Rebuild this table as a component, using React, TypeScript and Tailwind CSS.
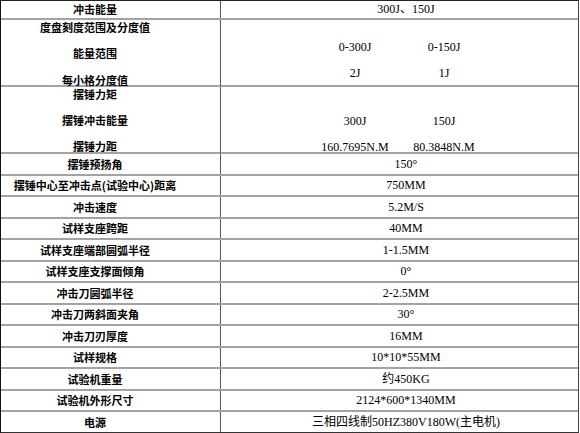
import React from 'react'

type Row = {
  label: string;
  value: string;
}

const rows: Row[] = [
  { label: '摆锤预扬角', value: '150°' },
  { label: '摆锤中心至冲击点(试验中心)距离', value: '750MM' },
  { label: '冲击速度', value: '5.2M/S' },
  { label: '试样支座跨距', value: '40MM' },
  { label: '试样支座端部圆弧半径', value: '1-1.5MM' },
  { label: '试样支座支撑面倾角', value: '0°' },
  { label: '冲击刀圆弧半径', value: '2-2.5MM' },
  { label: '冲击刀两斜面夹角', value: '30°' },
  { label: '冲击刀刃厚度', value: '16MM' },
  { label: '试样规格', value: '10*10*55MM' },
  { label: '试验机重量', value: '约450KG' },
  { label: '试验机外形尺寸', value: '2124*600*1340MM' },
  { label: '电源', value: '三相四线制50HZ380V180W(主电机)' },
]

const labelFont = { fontFamily: '"Noto Sans CJK SC", sans-serif' }
const valueFont = { fontFamily: '"Liberation Serif", "Noto Sans CJK SC", serif' }

const App: React.FC = () => {
  return (
    <div className="w-[580px] h-[433px] bg-white text-black">
      <div className="w-[579px] border-l border-t border-r-[1.5px] border-b-[1.5px] border-l-[#111] border-t-[#222] border-r-[#444] border-b-[#333]">
        {/* row 1 */}
        <div className="grid grid-cols-[220px_1fr] h-[18.5px] border-b-2 border-[#a3a3a3]">
          <div className="flex items-center justify-center pr-[31px] border-r border-[#555] text-[11px] font-bold leading-[12px]" style={labelFont}>冲击能量</div>
          <div className="flex items-center justify-center pl-[13px] text-[12px] leading-[12px]" style={valueFont}>300J、150J</div>
        </div>

        {/* row 2 */}
        <div className="grid grid-cols-[220px_1fr] h-[67.5px] border-b-2 border-[#a3a3a3]">
          <div className="flex flex-col items-center gap-[14.5px] pt-[1px] pr-[31px] border-r border-[#555] text-[11px] font-bold leading-[12px]" style={labelFont}>
            <span>度盘刻度范围及分度值</span>
            <span>能量范围</span>
            <span>每小格分度值</span>
          </div>
          <div className="flex flex-col gap-[14.6px] pt-[21px] pl-[78px] text-[12px] leading-[12px]" style={valueFont}>
            <div className="flex"><span className="w-[112px] text-center">0-300J</span><span className="w-[66px] text-center">0-150J</span></div>
            <div className="flex"><span className="w-[112px] text-center">2J</span><span className="w-[66px] text-center">1J</span></div>
          </div>
        </div>

        {/* row 3 */}
        <div className="grid grid-cols-[220px_1fr] h-[67px] border-b-2 border-[#a3a3a3]">
          <div className="flex flex-col items-center gap-[14px] pt-[1px] pr-[31px] border-r border-[#555] text-[11px] font-bold leading-[12px]" style={labelFont}>
            <span>摆锤力矩</span>
            <span>摆锤冲击能量</span>
            <span>摆锤力距</span>
          </div>
          <div className="flex flex-col gap-[14.6px] pt-[27.5px] pl-[78px] text-[12px] leading-[12px]" style={valueFont}>
            <div className="flex"><span className="w-[112px] text-center">300J</span><span className="w-[66px] text-center">150J</span></div>
            <div className="flex"><span className="w-[112px] text-center whitespace-nowrap">160.7695N.M</span><span className="w-[66px] text-center whitespace-nowrap">80.3848N.M</span></div>
          </div>
        </div>

        {rows.map((r, i) => (
          <div
            key={r.label}
            className={i === rows.length - 1
              ? 'grid grid-cols-[220px_1fr] h-[19.5px]'
              : 'grid grid-cols-[220px_1fr] h-[21.5px] border-b-2 border-[#a3a3a3]'}
          >
            <div className="flex items-center justify-center pr-[31px] border-r border-[#555] text-[11px] font-bold leading-[12px] whitespace-nowrap" style={labelFont}>{r.label}</div>
            <div className="flex items-center justify-center pl-[13px] text-[12px] leading-[12px] whitespace-nowrap" style={valueFont}>{r.value}</div>
          </div>
        ))}
      </div>
    </div>
  )
}

export default App
